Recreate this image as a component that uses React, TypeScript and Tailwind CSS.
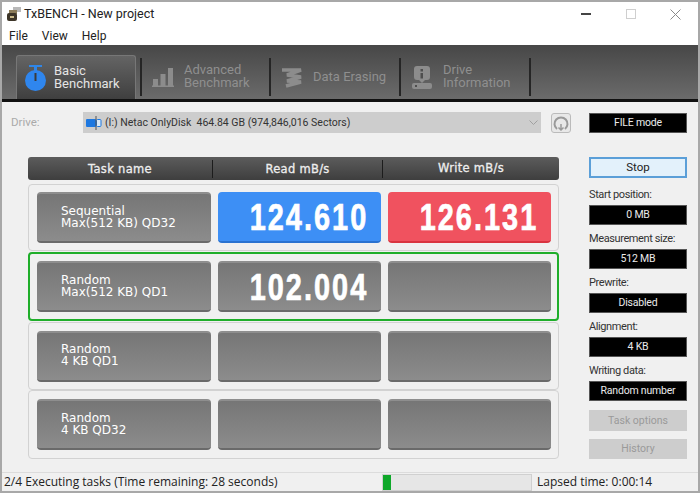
import React from "react";

const ui = "font-['Roboto','Noto_Sans',sans-serif]";

const tabGrad = "bg-[linear-gradient(#474747,#6b6b6b)]";

const StopwatchIcon = () => (
  <svg width="21" height="26" viewBox="0 0 21 26">
    <rect x="4" y="0" width="13" height="2" fill="#2f86e8" />
    <rect x="9" y="2" width="3" height="4" fill="#2f86e8" />
    <circle cx="10.5" cy="15.5" r="10.5" fill="#2f86ee" />
    <rect x="9.5" y="8" width="2" height="8" fill="#3a3a3a" />
  </svg>
);

const BarsIcon = () => (
  <svg width="22" height="19" viewBox="0 0 22 19" fill="#8c8c8c">
    <rect x="1" y="11" width="5" height="7" />
    <rect x="8.5" y="6" width="5" height="12" />
    <rect x="16" y="0" width="5" height="18" />
    <rect x="0" y="17.5" width="22" height="1.5" />
  </svg>
);

const EraseIcon = () => (
  <svg width="20" height="21" viewBox="0 0 20 21" fill="none" stroke="#8c8c8c" strokeWidth="3.5">
    <path d="M0 3 L19 3 L5 8 L19 10 L5 14 L19 15 L4 19" />
  </svg>
);

const InfoIcon = () => (
  <svg width="20" height="23" viewBox="0 0 20 23">
    <rect x="2" y="0" width="16" height="14" rx="3" fill="#8c8c8c" />
    <rect x="8.5" y="3" width="2.5" height="2.5" fill="#4e4e4e" />
    <rect x="8.5" y="7" width="2.5" height="5.5" fill="#4e4e4e" />
    <path d="M7 14 H13 L10 17 Z" fill="#8c8c8c" />
    <rect x="0" y="17" width="20" height="6" rx="2" fill="#8c8c8c" />
    <rect x="3" y="19" width="2" height="2" fill="#4e4e4e" />
  </svg>
);

const AppIcon = () => (
  <svg width="16" height="16" viewBox="0 0 16 16">
    <rect x="7" y="1" width="8" height="5" fill="#b9b9b9" />
    <rect x="3" y="4" width="8" height="4" fill="#8a7a58" />
    <rect x="1" y="7" width="10" height="8" rx="2" fill="#3d3528" />
    <rect x="4" y="10" width="4" height="2" fill="#c9b98a" />
  </svg>
);

const DriveIcon = () => (
  <svg width="16" height="14" viewBox="0 0 16 14">
    <rect x="0" y="3" width="10" height="8" rx="1" fill="#1e78e0" />
    <rect x="10.5" y="3.5" width="4.5" height="7" rx="1" fill="#d8e8f8" stroke="#1e78e0" />
    <rect x="9.5" y="0" width="1" height="14" fill="#555" />
  </svg>
);

const RefreshIcon = () => (
  <svg width="16" height="16" viewBox="0 0 16 16" fill="none" stroke="#9a9a9a" strokeWidth="2">
    <path d="M4 14 A6.5 6.5 0 1 1 12 14" />
    <path d="M8 9 L8 15 M5.5 12.5 L8 15 L10.5 12.5" strokeWidth="1.5" />
  </svg>
);

const Tab = ({
  icon,
  lines,
  active,
  width,
}: {
  icon: React.ReactNode;
  lines: string[];
  active?: boolean;
  width: string;
}) => (
  <div className={`flex items-center h-[44px] ${width}`}>
    <div className={`flex-1 h-[44px] ${active ? "pr-[4px]" : ""}`}>
      <div
        className={`flex items-center h-[44px] rounded-t-[3px] ${
          active ? "bg-[linear-gradient(#646464,#3f3f3f)] border border-[#777] border-b-0" : ""
        }`}
      >
        <div className={`flex justify-center shrink-0 ${active ? "w-[37px]" : "w-[42px]"}`}>{icon}</div>
        <div
          className={`text-[13px] leading-[13px] pb-[2px] whitespace-nowrap ${
            active ? "text-[#e4e4e4]" : "text-[#8f8f8f]"
          }`}
        >
          {lines.map((l) => (
            <div key={l}>{l}</div>
          ))}
        </div>
      </div>
    </div>
    <div className="w-[2px] h-[38px] bg-[#252525] shrink-0" />
  </div>
);

const Cell = ({ children, color, width }: { children?: React.ReactNode; color?: string; width: string }) => (
  <div
    className={`h-[51px] ${width} shrink-0 rounded-[4px] flex items-center justify-center pl-[18px] pt-[2px] ${
      color ||
      "bg-[linear-gradient(#767676,#8c8c8c)] border-t-2 border-b-2 border-t-[#8e8e8e] border-b-[#6a6a6a]"
    }`}
  >
    {children}
  </div>
);

const Num = ({ v }: { v: string }) => (
  <span className="inline-block scale-x-[0.78] font-['Liberation_Sans',sans-serif] font-bold text-white text-[37px] tracking-[2.6px] leading-none [-webkit-text-stroke:0.7px_white]">
    {v}
  </span>
);

const Row = ({
  a,
  b,
  read,
  write,
  hot,
  h,
}: {
  a: string;
  b: string;
  read?: React.ReactNode;
  write?: React.ReactNode;
  hot?: boolean;
  h: string;
}) => (
  <div
    className={`${h} rounded-[4px] flex items-center gap-[7px] ${
      hot ? "border-2 border-[#1fae2a] pl-[7px]" : "border border-[#d2d2d2] pl-[8px]"
    }`}
  >
    <div className="h-[51px] w-[174px] shrink-0 rounded-[4px] bg-[linear-gradient(#767676,#8c8c8c)] border-t-2 border-b-2 border-t-[#8e8e8e] border-b-[#6a6a6a] flex items-center pl-[24px]">
      <div className="font-['DejaVu_Sans',sans-serif] text-[12px] leading-[12px] pb-[2px] text-white">
        <div>{a}</div>
        <div>{b}</div>
      </div>
    </div>
    {read || <Cell width="w-[163px]" />}
    {write || <Cell width="w-[163px]" />}
  </div>
);

const Field = ({ label, value }: { label: string; value: string }) => (
  <div>
    <div className="text-[11px] tracking-[-0.4px] leading-[14px] text-[#333] h-[17px] whitespace-nowrap">{label}</div>
    <div className="h-[20px] bg-black text-[#eaeaea] text-[10.5px] tracking-[-0.2px] flex items-center justify-center border border-[#555] mb-[7px] whitespace-nowrap">
      {value}
    </div>
  </div>
);

export default function App() {
  return (
    <div className={`w-[700px] h-[493px] overflow-hidden bg-[#f0f0f0] border-2 border-[#a8a8a8] flex flex-col ${ui}`}>
      {/* title bar + menu */}
      <div className="bg-white h-[43px] shrink-0 text-[#222] relative">
        <div className="flex items-center h-[24px] pl-[4px] gap-[2px] text-[12.5px]">
          <AppIcon />
          <span>TxBENCH - New project</span>
          <div className="ml-auto flex items-center text-[#999]">
            <div className="w-[45px] flex justify-center">
              <div className="w-[10px] h-[1.5px] bg-[#444]" />
            </div>
            <div className="w-[45px] flex justify-center">
              <div className="w-[10px] h-[10px] border border-[#cfcfcf]" />
            </div>
            <div className="w-[45px] flex justify-center">
              <svg width="11" height="11" viewBox="0 0 11 11" stroke="#8a8a8a" fill="none">
                <path d="M0.5 0.5 L10.5 10.5 M10.5 0.5 L0.5 10.5" />
              </svg>
            </div>
          </div>
        </div>
        <div className="flex gap-[14px] pl-[7px] text-[12px] leading-[20px]">
          <span>File</span>
          <span>View</span>
          <span>Help</span>
        </div>
      </div>

      {/* toolbar */}
      <div className={`${tabGrad} h-[57px] shrink-0 border-b-[3px] border-b-[#111] flex items-end pl-[14px]`}>
        <Tab active width="w-[126px]" icon={<StopwatchIcon />} lines={["Basic", "Benchmark"]} />
        <Tab width="w-[129px]" icon={<BarsIcon />} lines={["Advanced", "Benchmark"]} />
        <Tab width="w-[130px]" icon={<EraseIcon />} lines={["Data Erasing"]} />
        <Tab width="w-[130px]" icon={<InfoIcon />} lines={["Drive", "Information"]} />
      </div>

      {/* drive row */}
      <div className="flex items-center h-[21px] mt-[10px] shrink-0 pl-[9px]">
        <div className="w-[72px] text-[11.5px] text-[#aaa]">Drive:</div>
        <div className="w-[458px] h-[21px] bg-[#cdcdcd] flex items-center pl-[3px] gap-[3px] text-[10.5px] text-[#333] whitespace-pre">
          <DriveIcon />
          <span>(I:) Netac OnlyDisk  464.84 GB (974,846,016 Sectors)</span>
          <svg className="ml-auto mr-[3px]" width="9" height="6" viewBox="0 0 9 6" fill="none" stroke="#a0a0a0">
            <path d="M0.5 0.5 L4.5 4.5 L8.5 0.5" />
          </svg>
        </div>
        <div className="ml-[10px] w-[20px] h-[20px] border border-[#bbb] rounded-[3px] bg-[#e8e8e8] flex items-center justify-center">
          <RefreshIcon />
        </div>
        <div className="ml-[18px] w-[98px] h-[20px] bg-black border border-[#555] text-[#eaeaea] text-[10.5px] tracking-[-0.2px] flex items-center justify-center">
          FILE mode
        </div>
      </div>

      {/* main */}
      <div className="flex mt-[24px] pl-[26px] shrink-0">
        <div className="w-[531px] shrink-0">
          <div className="h-[23px] rounded-[3px] bg-[linear-gradient(#5c5c5c,#3e3e3e)] flex items-center font-['DejaVu_Sans',sans-serif] text-[11.5px] text-[#eee] tracking-[0.3px] mb-[4px] [-webkit-text-stroke:0.3px_#eee]">
            <div className="w-[185px] text-center border-r border-r-[#1c1c1c] h-[18px] leading-[18px]">Task name</div>
            <div className="w-[170px] text-center border-r border-r-[#1c1c1c] h-[18px] leading-[18px]">Read mB/s</div>
            <div className="flex-1 text-center">Write mB/s</div>
          </div>
          <Row
            h="h-[67px]"
            a="Sequential"
            b="Max(512 KB) QD32"
            read={
              <Cell width="w-[163px]" color="bg-[#3d8ff5] border-b-2 border-b-[#2a72d0]">
                <Num v="124.610" />
              </Cell>
            }
            write={
              <Cell width="w-[163px]" color="bg-[#f0525f] border-b-2 border-b-[#d93440]">
                <Num v="126.131" />
              </Cell>
            }
          />
          <div className="h-[1px]" />
          <Row h="h-[69px]" hot a="Random" b="Max(512 KB) QD1" read={<Cell width="w-[163px]"><Num v="102.004" /></Cell>} />
          <div className="h-[1px]" />
          <Row h="h-[68px]" a="Random" b="4 KB QD1" />
          <Row h="h-[69px]" a="Random" b="4 KB QD32" />
        </div>

        <div className="w-[98px] ml-[30px] shrink-0">
          <div className="h-[21px] border-2 border-[#5b9fd8] bg-[#e3f1fb] text-[11.5px] text-[#222] flex items-center justify-center mb-[10px]">
            Stop
          </div>
          <Field label="Start position:" value="0 MB" />
          <Field label="Measurement size:" value="512 MB" />
          <Field label="Prewrite:" value="Disabled" />
          <Field label="Alignment:" value="4 KB" />
          <Field label="Writing data:" value="Random number" />
          <div className="h-[21px] mt-[9px] bg-[#cdcdcd] text-[#9a9a9a] text-[10.5px] flex items-center justify-center mb-[8px]">
            Task options
          </div>
          <div className="h-[20px] bg-[#cdcdcd] text-[#9a9a9a] text-[10.5px] flex items-center justify-center">
            History
          </div>
        </div>
      </div>

      {/* status bar */}
      <div className="mt-auto h-[19px] shrink-0 border-t border-t-[#dcdcdc] flex items-center font-['Open_Sans',sans-serif] text-[12px] text-[#222]">
        <div className="w-[380px] pl-[2px] whitespace-nowrap">2/4 Executing tasks (Time remaining: 28 seconds)</div>
        <div className="w-[150px] h-[17px] bg-[#e6e6e6] border border-[#d0d0d0] flex">
          <div className="w-[8px] bg-[#0fa82a]" />
        </div>
        <div className="pl-[5px] whitespace-nowrap">Lapsed time: 0:00:14</div>
      </div>
    </div>
  );
}
